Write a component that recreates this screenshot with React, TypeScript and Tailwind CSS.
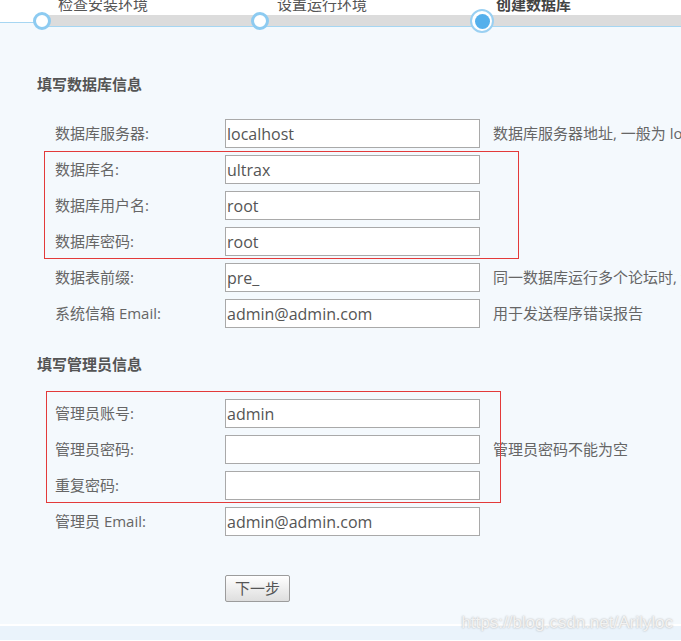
const font = "font-['Open_Sans','Noto_Sans_CJK_SC',sans-serif]";

type Row = { label: string; value: string; hint?: string };

const dbRowsTop: Row[] = [
  { label: "数据库服务器:", value: "localhost", hint: "数据库服务器地址, 一般为 localhost" },
];

const dbRowsBoxed: Row[] = [
  { label: "数据库名:", value: "ultrax" },
  { label: "数据库用户名:", value: "root" },
  { label: "数据库密码:", value: "root" },
];

const dbRowsBottom: Row[] = [
  { label: "数据表前缀:", value: "pre_", hint: "同一数据库运行多个论坛时, 请修改前缀" },
  { label: "系统信箱 Email:", value: "admin@admin.com", hint: "用于发送程序错误报告" },
];

const adminRowsBoxed: Row[] = [
  { label: "管理员账号:", value: "admin" },
  { label: "管理员密码:", value: "", hint: "管理员密码不能为空" },
  { label: "重复密码:", value: "" },
];

function FormRow({ label, value, hint }: Row) {
  return (
    <div className="flex h-[29px] items-center pl-[55px]">
      <span className="w-[170px] shrink-0 text-[15px] text-[#666]">{label}</span>
      <input
        type="text"
        defaultValue={value}
        className="h-[29px] w-[255px] shrink-0 border border-[#a9a9a9] bg-white px-[1px] text-[16px] text-[#555] outline-none"
      />
      {hint ? <span className="ml-[13px] whitespace-nowrap text-[15px] text-[#666]">{hint}</span> : null}
    </div>
  );
}

function Stepper() {
  const steps = [
    { label: "检查安装环境", x: "left-[33px]", tx: "left-[58px]" },
    { label: "设置运行环境", x: "left-[251px]", tx: "left-[277px]" },
  ];
  return (
    <div className="pointer-events-none absolute inset-x-0 top-0 h-[34px]">
      <div className="absolute left-[42px] right-0 top-[15px] h-[12px] border-b border-[#a6d6f2] bg-[#dcdcdc]" />
      {steps.map((s) => (
        <div key={s.label}>
          <div className={`absolute top-[12px] h-[18px] w-[18px] rounded-full border-[3px] border-[#8dcbf1] bg-white ${s.x}`} />
          <span className={`absolute top-[-3px] text-[15px] leading-[15px] text-[#555] ${s.tx}`}>{s.label}</span>
        </div>
      ))}
      <div className="absolute left-[470px] top-[9px] flex h-[24px] w-[24px] items-center justify-center rounded-full border-2 border-[#9ad0f2] bg-white">
        <div className="h-[15px] w-[15px] rounded-full bg-[#55b0ec]" />
      </div>
      <span className="absolute left-[496px] top-[-3px] text-[15px] font-bold leading-[15px] text-[#444]">创建数据库</span>
    </div>
  );
}

export default function App() {
  return (
    <div className={`relative h-[641px] w-full overflow-hidden bg-white ${font}`}>
      <div className="h-[22px] bg-white" />
      <div className="border-t border-[#a6d6f2] bg-[#f4f9fd] pb-[22px] pt-[51px]">
        <h2 className="pl-[37px] text-[15px] font-bold leading-[20px] text-[#555]">填写数据库信息</h2>

        <div className="mt-[25px] flex flex-col gap-[7px]">
          {dbRowsTop.map((r) => (
            <FormRow key={r.label} {...r} />
          ))}
          <div className="relative flex flex-col gap-[7px]">
            {dbRowsBoxed.map((r) => (
              <FormRow key={r.label} {...r} />
            ))}
            <div className="pointer-events-none absolute -bottom-[3px] -top-[4px] left-[44px] w-[475px] border border-[#e33a3a]" />
          </div>
          {dbRowsBottom.map((r) => (
            <FormRow key={r.label} {...r} />
          ))}
        </div>

        <h2 className="mt-[26px] pl-[37px] text-[15px] font-bold leading-[20px] text-[#555]">填写管理员信息</h2>

        <div className="mt-[25px] flex flex-col gap-[7px]">
          <div className="relative flex flex-col gap-[7px]">
            {adminRowsBoxed.map((r) => (
              <FormRow key={r.label} {...r} />
            ))}
            <div className="pointer-events-none absolute -bottom-[3px] -top-[8px] left-[46px] w-[455px] border border-[#e33a3a]" />
          </div>
          <FormRow label="管理员 Email:" value="admin@admin.com" />
        </div>

        <div className="mt-[39px] pl-[225px]">
          <button
            type="button"
            className="h-[27px] w-[65px] rounded-[2px] border border-[#9c9c9c] bg-gradient-to-b from-white to-[#dedede] text-[15px] text-[#555]"
          >
            下一步
          </button>
        </div>
      </div>
      <div className="h-[2px] bg-white" />
      <div className="h-[14px] bg-[#eaf3fb]" />
      <Stepper />
      <span className="absolute bottom-[8px] right-[8px] font-['Liberation_Sans',sans-serif] text-[17px] leading-[20px] text-[#f2f2f2] [text-shadow:0_0_2px_#a8a8a8]">
        https://blog.csdn.net/Arilyloc
      </span>
    </div>
  );
}
